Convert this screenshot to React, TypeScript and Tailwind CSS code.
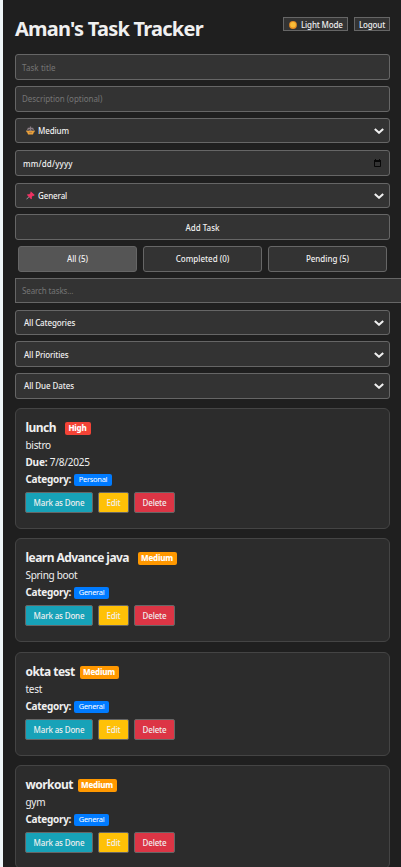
import type { ReactNode } from "react";

type Task = {
  title: string;
  titleClass: string;
  note: string;
  due?: string;
  category: string;
  priority: "High" | "Medium";
  cardClass: string;
};

const tasks: Task[] = [
  { title: "lunch", titleClass: "w-[39px]", note: "bistro", due: "7/8/2025", category: "Personal", priority: "High", cardClass: "h-[121px] mb-[9px]" },
  { title: "learn Advance java", titleClass: "w-[112px]", note: "Spring boot", category: "General", priority: "Medium", cardClass: "h-[104px] mb-[10px]" },
  { title: "okta test", titleClass: "w-[54px]", note: "test", category: "General", priority: "Medium", cardClass: "h-[104px] mb-[9px]" },
  { title: "workout", titleClass: "w-[52px]", note: "gym", category: "General", priority: "Medium", cardClass: "h-[104px]" },
];

function Chevron() {
  return (
    <svg className="ml-auto h-[6px] w-[10px]" viewBox="0 0 10 6" fill="none">
      <path d="M.8 1 5 4.7 9.2 1" stroke="#f0f0f0" strokeWidth="2.1" />
    </svg>
  );
}

function Scales() {
  return (
    <svg className="mr-[3px] h-[9px] w-[9px]" viewBox="0 0 9 9">
      <path d="M4.5.5v6M1.8 2.4h5.4" stroke="#8a7d85" strokeWidth="1.3" />
      <path d="M2.2 2.4.7 5M2.2 2.4 3.5 5M6.8 2.4 5.5 5M6.8 2.4 8.3 5" stroke="#8a7d85" strokeWidth=".8" />
      <path d="M.2 4.7h3.5l.8.6.8-.6h3.5q0 1.4-1.1 1.9L7 8.4H2L1.3 6.6Q.2 6.1.2 4.7Z" fill="#eaa03a" />
      <path d="M3 6.6h3" stroke="#8b6950" strokeWidth=".6" />
    </svg>
  );
}

function Pin() {
  return (
    <svg className="mr-[3px] h-[9px] w-[9px]" viewBox="0 0 9 9">
      <path d="M.5 8.3 3.4 5.3" stroke="#a7a0a6" strokeWidth=".9" />
      <path d="m4.9.4 3.8 3.7-1.1.8-.8-.1-1 1.3.1 1.7-.8.4L1 4.1l.5-.8 1.7 0 1.4-1.2-.3-1Z" fill="#ee3263" />
    </svg>
  );
}

function Field({ className, children }: { className: string; children: ReactNode }) {
  return (
    <div className={`flex shrink-0 items-center rounded-[3px] border border-[#666] bg-[#333] text-[8px] whitespace-nowrap text-[#f0f0f0] ${className}`}>
      {children}
    </div>
  );
}

function TaskCard({ task }: { task: Task }) {
  return (
    <article className={`shrink-0 rounded-[6px] border border-[#444] bg-[#2c2c2c] pt-[9px] pl-[9px] text-[10px] whitespace-nowrap text-[#f0f0f0] ${task.cardClass}`}>
      <div className="flex h-[18px] items-center pl-[.5px]">
        <h3 className={`text-[12px] leading-[17px] font-bold tracking-[-0.045em] ${task.titleClass}`}>{task.title}</h3>
        <span className={`mt-[2px] flex h-[13px] items-center justify-center rounded-[2px] text-[8px] font-extrabold tracking-[-0.03em] text-white ${task.priority === "High" ? "w-[26px] bg-[#f44336]" : "w-[39px] bg-[#ff9800]"}`}>
          {task.priority}
        </span>
      </div>
      <p className="h-[18px] pl-[.5px] leading-[18px] tracking-[-0.03em]">{task.note}</p>
      {task.due && (
        <p className="h-[17px] pl-[.5px] leading-[17px] tracking-[-0.02em]"><b>Due:</b> {task.due}</p>
      )}
      <div className="flex h-[17px] items-center pl-[.5px]">
        <b className="w-[48.5px] tracking-[-0.03em]">Category:</b>
        <span className={`flex h-[12px] items-center justify-center rounded-[2px] bg-[#007bff] text-[7.5px] tracking-[-0.04em] text-white ${task.category === "Personal" ? "w-[38px]" : "w-[35px]"}`}>
          {task.category}
        </span>
      </div>
      <div className="mt-[4px] flex text-[8px] font-medium tracking-[-0.02em]">
        <button className="mr-[5px] h-[21px] w-[68px] rounded-[2px] border border-[#666] bg-[#17a2b8]">Mark as Done</button>
        <button className="mr-[5px] h-[21px] w-[31px] rounded-[2px] border border-[#666] bg-[#ffc107]">Edit</button>
        <button className="h-[21px] w-[41px] rounded-[2px] border border-[#666] bg-[#dc3545]">Delete</button>
      </div>
    </article>
  );
}

export default function App() {
  return (
    <div className="h-[867px] w-[401px] overflow-hidden bg-[#eef5f8] pl-[3px] font-['Noto_Sans','Open_Sans',sans-serif]">
      <main className="flex h-full flex-col overflow-hidden bg-[#1f1f1f] pl-[12px]">
        <header className="flex h-[54px] w-[375px] shrink-0 text-[#f0f0f0]">
          <h1 className="mt-[15px] h-[28px] w-[268px] text-[20px] leading-[28px] font-bold tracking-[-0.038em] whitespace-nowrap">Aman's Task Tracker</h1>
          <button className="mt-[17px] mr-[6px] flex h-[14px] w-[65px] items-center border border-[#666] bg-[#333] pt-[2px] pl-[5px] text-[8px] font-medium tracking-[-0.02em] whitespace-nowrap">
            <svg className="mr-[4px] mb-[1px] h-[8px] w-[8px]" viewBox="0 0 8 8">
              <circle cx="4" cy="4" r="3.9" fill="#e58a22" />
              <circle cx="4" cy="3.8" r="2.8" fill="#fbbd37" />
            </svg>
            Light Mode
          </button>
          <button className="mt-[17px] flex h-[14px] w-[36px] items-center justify-center border border-[#666] bg-[#333] pt-[2px] text-[8px] font-medium tracking-[-0.02em]">Logout</button>
        </header>
        <form className="flex w-[375px] shrink-0 flex-col font-medium">
          <Field className="mb-[6px] h-[26px] pt-[2px] pl-[6px]"><span className="font-normal tracking-[0.01em] text-[#757575]">Task title</span></Field>
          <Field className="mb-[6px] h-[26px] pl-[6px]"><span className="font-normal tracking-[-0.004em] text-[#757575]">Description (optional)</span></Field>
          <Field className="mb-[7px] h-[25px] pr-[5px] pl-[10px] tracking-[-0.015em]"><Scales />Medium<Chevron /></Field>
          <Field className="mb-[7px] h-[26px] pt-[2px] pr-[8px] pl-[7px] tracking-[0.02em]">
            mm/dd/yyyy
            <svg className="mb-[2px] ml-auto h-[8px] w-[7px]" viewBox="0 0 7 8" fill="none">
              <path d="M.5 1.5h6v6h-6Z" stroke="#080808" />
              <path d="M0 1h7v2H0ZM1 0h1v1H1ZM5 0h1v1H5Z" fill="#080808" />
            </svg>
          </Field>
          <Field className="mb-[6px] h-[25px] pr-[5px] pl-[10px] tracking-[-0.015em]"><Pin />General<Chevron /></Field>
          <Field className="mb-[6px] h-[26px] justify-center pt-[2px]">Add Task</Field>
        </form>
        <nav className="mb-[6px] ml-[3px] flex shrink-0 gap-[6px] font-medium">
          <Field className="h-[26px] w-[119px] justify-center bg-[#555]!">All (5)</Field>
          <Field className="h-[26px] w-[119px] justify-center">Completed (0)</Field>
          <Field className="h-[26px] w-[119px] justify-center">Pending (5)</Field>
        </nav>
        <section className="flex w-[375px] shrink-0 flex-col font-medium">
          <Field className="mb-[7px] h-[25px] w-[400px] rounded-none! pl-[6px]"><span className="font-normal tracking-[-0.015em] text-[#757575]">Search tasks...</span></Field>
          <Field className="mb-[6px] h-[25px] pr-[5px] pl-[8px] tracking-[-0.015em]">All Categories<Chevron /></Field>
          <Field className="mb-[6px] h-[26px] pt-[1px] pr-[5px] pl-[8px] tracking-[-0.015em]">All Priorities<Chevron /></Field>
          <Field className="mb-[9px] h-[26px] pr-[5px] pl-[8px] tracking-[-0.01em]">All Due Dates<Chevron /></Field>
        </section>
        <section className="flex w-[375px] flex-col">
          {tasks.map((task) => <TaskCard key={task.title} task={task} />)}
        </section>
      </main>
    </div>
  );
}
